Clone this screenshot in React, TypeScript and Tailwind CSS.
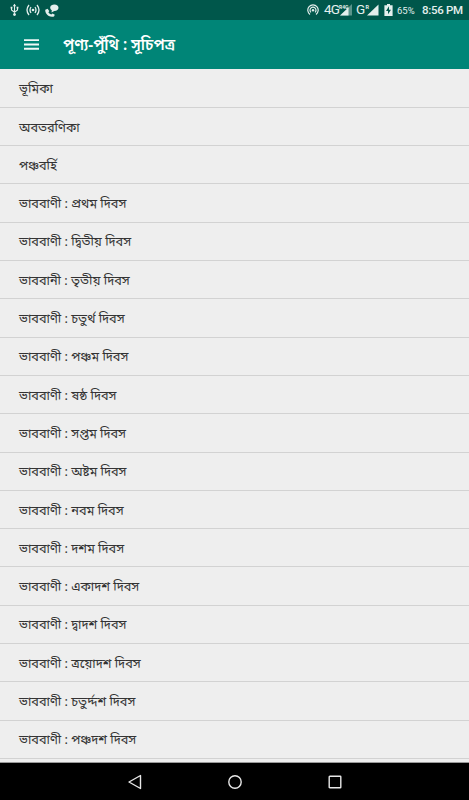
import React from "react";

const rows = [
  "ভূমিকা",
  "অবতরণিকা",
  "পঞ্চবর্হি",
  "ভাববাণী : প্রথম দিবস",
  "ভাববাণী : দ্বিতীয় দিবস",
  "ভাববানী : তৃতীয় দিবস",
  "ভাববাণী : চতুর্থ দিবস",
  "ভাববাণী : পঞ্চম দিবস",
  "ভাববাণী : ষষ্ঠ দিবস",
  "ভাববাণী : সপ্তম দিবস",
  "ভাববাণী : অষ্টম দিবস",
  "ভাববাণী : নবম দিবস",
  "ভাববাণী : দশম দিবস",
  "ভাববাণী : একাদশ দিবস",
  "ভাববাণী : দ্বাদশ দিবস",
  "ভাববাণী : ত্রয়োদশ দিবস",
  "ভাববাণী : চতুর্দ্দশ দিবস",
  "ভাববাণী : পঞ্চদশ দিবস",
];

function StatusBar() {
  return (
    <div className="flex h-[20px] shrink-0 items-center bg-[#00574b] text-[#e4efed]">
      <svg className="ml-[10px] h-[14px] w-[9px]" viewBox="0 0 9 14" fill="none" stroke="currentColor" strokeWidth="1.1">
        <path d="M4.5 1.5V11M1.5 5v2L4.5 9.2L7.5 7V4.8" />
        <path d="M2.8 3.3L4.5 .7L6.2 3.3Z" fill="currentColor" stroke="none" />
        <circle cx="4.5" cy="11.6" r="1.4" fill="currentColor" stroke="none" />
        <path d="M.6 3.8h1.8v1.8H.6ZM6.6 3.8h1.8v1.8H6.6Z" fill="currentColor" stroke="none" />
      </svg>
      <svg className="ml-[7px] h-[12px] w-[14px]" viewBox="0 0 14 12" fill="none" stroke="currentColor" strokeWidth="1.3">
        <path d="M3 1Q-1 6 3 11M5 3Q3 6 5 9M11 1Q15 6 11 11M9 3Q11 6 9 9" />
        <circle cx="7" cy="6" r="1.3" fill="currentColor" stroke="none" />
      </svg>
      <svg className="ml-[5px] h-[13px] w-[14px]" viewBox="0 0 14 13" fill="currentColor">
        <path d="M.3 5.8L2.6 4.8L4.2 7L3.4 8.4Q4.6 10.1 6.3 10.4L7.5 9.4L9.8 10.8L9 12.5Q4 13.5 1.2 9.5Q0 7.6 .3 5.8Z" />
        <path d="M9.3 .5C12 .5 13.5 1.8 13.5 3.7S12 7 9.3 7L6.5 8.5L6.8 6.2C4 4.5 5 .5 9.3 .5Z" />
      </svg>
      <svg className="ml-[248px] h-[12px] w-[12px]" viewBox="0 0 12 12" fill="none" stroke="currentColor" strokeWidth="1.2">
        <path d="M3 10.4A5.2 5.2 0 1 1 9 10.4M4 8.4A3 3 0 1 1 8 8.4" />
        <circle cx="6" cy="6.2" r="1.2" fill="currentColor" stroke="none" />
      </svg>
      <span className="ml-[5px] w-[16px] whitespace-nowrap font-[Roboto] text-[13.5px] leading-none tracking-[-0.8px]">4G</span>
      <svg className="h-[13px] w-[13px] overflow-visible" viewBox="0 0 13 13">
        <path d="M0 11.5L12 0V11.5Z" fill="#5a948b" />
        <path d="M0 11.5L8.5 3.5V11.5Z" fill="currentColor" />
        <text x="-1" y="4.5" fill="currentColor" fontSize="5" fontFamily="Roboto" fontWeight="700">R4G</text>
      </svg>
      <span className="ml-[3px] w-[10px] font-[Roboto] text-[13.5px] leading-none">G</span>
      <svg className="h-[13px] w-[13px] overflow-visible" viewBox="0 0 13 13">
        <path d="M1 11.5L12.5 .5V11.5Z" fill="currentColor" />
        <text x="-.5" y="4.5" fill="currentColor" fontSize="5.5" fontFamily="Roboto" fontWeight="700">R</text>
      </svg>
      <svg className="ml-[5px] h-[12px] w-[9px]" viewBox="0 0 9 12">
        <path d="M3 0h3v1.2h2.6V12H.4V1.2H3Z" fill="currentColor" />
        <path d="M5 2.3L2 7h2v3.2L7 5.7H5Z" fill="#00574b" />
      </svg>
      <span className="ml-[4px] w-[20px] whitespace-nowrap pt-px font-[Roboto] text-[9.5px] leading-none">65%</span>
      <span className="ml-[5px] whitespace-nowrap pt-px font-[Roboto] text-[11.5px] font-medium leading-none tracking-[-0.3px]">8:56 PM</span>
    </div>
  );
}

export default function App() {
  return (
    <div className="flex h-[800px] w-[469px] flex-col overflow-hidden bg-[#eeeeee] font-['Noto_Sans_Bengali','Noto_Sans',sans-serif]">
      <StatusBar />
      <header className="flex h-[49px] shrink-0 items-center bg-[#008577]">
        <svg className="ml-[24px] h-[11px] w-[15px]" viewBox="0 0 15 11" fill="#f0f8f7">
          <path d="M0 .2h15v1.9H0ZM0 4.5h15v1.9H0ZM0 8.8h15v1.9H0Z" />
        </svg>
        <h1 className="ml-[24px] whitespace-nowrap pt-[3px] text-[15.3px] font-semibold leading-[24px] text-white">পূণ্য-পুঁথি : সূচিপত্র</h1>
      </header>
      <main className="min-h-0 flex-1 overflow-hidden border-b border-[#999] pt-[0.6px]">
        {rows.map((row) => (
          <div key={row} className="flex h-[38.3px] items-center whitespace-nowrap border-b border-[#d2d2d2] pt-[4px] pl-[19px] text-[12.75px] leading-[20px] text-[#333]">
            {row}
          </div>
        ))}
      </main>
      <nav className="flex h-[37px] shrink-0 items-center justify-center gap-[86px] bg-black text-[#e8e8e8]">
        <svg className="h-[16px] w-[14px]" viewBox="0 0 14 16" fill="none" stroke="currentColor" strokeWidth="1.4"><path d="M12.5 1.5V14.5L1 8Z" strokeLinejoin="round" /></svg>
        <svg className="h-[14px] w-[14px]" viewBox="0 0 14 14" fill="none" stroke="currentColor" strokeWidth="1.4"><circle cx="7" cy="7" r="6.2" /></svg>
        <svg className="h-[14px] w-[14px]" viewBox="0 0 14 14" fill="none" stroke="currentColor" strokeWidth="1.4"><rect x="1.2" y="1.2" width="11.6" height="11.6" rx=".6" /></svg>
      </nav>
    </div>
  );
}
